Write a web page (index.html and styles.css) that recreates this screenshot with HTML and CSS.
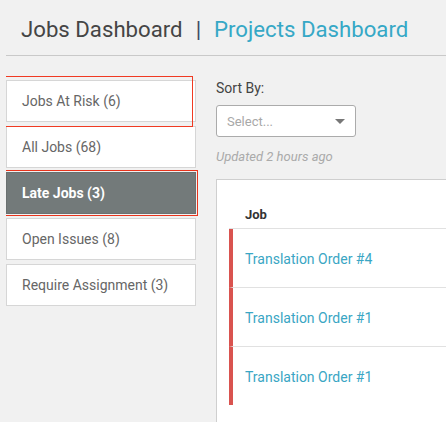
FILE: index.html
```html
<!DOCTYPE html>
<html>
<head>
<meta charset="utf-8">
<link rel="stylesheet" href="styles.css">
</head>
<body>
<div class="page">
  <header class="header">
    <span class="title">Jobs Dashboard</span>
    <span class="sep">|</span>
    <span class="title link">Projects Dashboard</span>
  </header>
  <div class="main">
    <nav class="sidebar">
      <div class="item">Jobs At Risk (6)</div>
      <div class="item">All Jobs (68)</div>
      <div class="item active">Late Jobs (3)</div>
      <div class="item">Open Issues (8)</div>
      <div class="item">Require Assignment (3)</div>
      <div class="highlight"></div>
    </nav>
    <section class="content">
      <div class="label">Sort By:</div>
      <div class="select">
        <span class="placeholder">Select...</span>
        <span class="caret"></span>
      </div>
      <div class="updated">Updated 2 hours ago</div>
      <div class="panel">
        <div class="thead">Job</div>
        <div class="row"><a class="job">Translation Order #4</a></div>
        <div class="row"><a class="job">Translation Order #1</a></div>
        <div class="row"><a class="job">Translation Order #1</a></div>
      </div>
    </section>
  </div>
</div>
</body>
</html>
```
FILE: styles.css
```css
html, body {
  margin: 0;
  padding: 0;
  background: #f1f1f1;
  font-family: Roboto, "Liberation Sans", Arial, sans-serif;
  overflow: hidden;
}
.page {
  margin-left: 6px;
  height: 422px;
  overflow: hidden;
}
.header {
  height: 52px;
  padding-top: 3px;
  border-bottom: 1px solid #c9c9c9;
  padding-left: 15px;
  box-sizing: content-box;
  display: flex;
  align-items: center;
  font-size: 22.2px;
  color: #454545;
  white-space: nowrap;
}
.sep {
  margin: 0 13px 0 13px;
  color: #3d4b66;
}
.link { color: #36a8c6; }
.main {
  display: flex;
  gap: 20px;
  padding-top: 24px;
}
.sidebar {
  position: relative;
  width: 190px;
  display: flex;
  flex-direction: column;
  gap: 4px;
}
.item {
  height: 42px;
  box-sizing: border-box;
  border: 1px solid #d6d6d6;
  background: #fff;
  padding-left: 15px;
  display: flex;
  align-items: center;
  font-size: 14px;
  color: #666;
}
.item.active {
  background: #737a7a;
  border-color: #6a7070;
  color: #fff;
  font-weight: 700;
  outline: 1px solid #e8341c;
  outline-offset: 1px;
}
.highlight {
  position: absolute;
  left: -2px;
  top: -4px;
  width: 189px;
  height: 51px;
  box-sizing: border-box;
  border: 1px solid #f03a22;
}
.content {
  flex: 1;
  display: flex;
  flex-direction: column;
}
.label {
  font-size: 14px;
  color: #444;
  line-height: 18px;
  margin-top: -1px;
}
.select {
  margin-top: 8px;
  width: 140px;
  height: 32px;
  box-sizing: border-box;
  border: 1px solid #ababab;
  border-radius: 3px;
  background: #fff;
  display: flex;
  align-items: center;
  justify-content: space-between;
  padding: 1px 10px 0 10px;
}
.placeholder {
  font-size: 13px;
  color: #a8a8a8;
}
.caret {
  width: 0;
  height: 0;
  border-left: 5px solid transparent;
  border-right: 5px solid transparent;
  border-top: 5px solid #777;
}
.updated {
  margin-top: 12px;
  font-size: 13px;
  font-style: italic;
  color: #aaa;
  line-height: 16px;
}
.panel {
  margin-top: 14px;
  height: 260px;
  background: #fff;
  border-top: 1px solid #cfcfcf;
  border-left: 1px solid #cfcfcf;
  padding-left: 12px;
}
.thead {
  height: 49px;
  box-sizing: border-box;
  border-bottom: 1px solid #e1e1e1;
  padding-left: 16px;
  display: flex;
  align-items: center;
  padding-top: 21px;
  font-size: 13px;
  font-weight: 700;
  color: #333;
}
.row {
  height: 59px;
  box-sizing: border-box;
  border-left: 4px solid #d9534f;
  border-bottom: 1px solid #e1e1e1;
  padding-left: 12px;
  padding-top: 2px;
  display: flex;
  align-items: center;
}
.row:last-child { border-bottom: none; height: 58px; }
.job {
  font-size: 14px;
  color: #3aa6c4;
}
```
